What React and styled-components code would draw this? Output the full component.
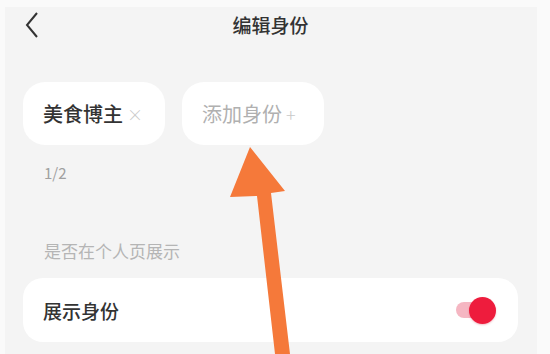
import styled, { createGlobalStyle } from 'styled-components';

const GlobalStyle = createGlobalStyle`
  html, body {
    margin: 0;
    padding: 0;
    background: #fafafa;
  }
  body {
    font-family: "Noto Sans CJK SC", "Noto Sans", sans-serif;
  }
`;

const Frame = styled.div`
  position: relative;
  width: 550px;
  height: 354px;
  overflow: hidden;
  background: #fafafa;
`;

const Screen = styled.div`
  margin: 7px 13px 0 5px;
  height: 347px;
  background: #f4f4f4;
  padding: 0 19px 0 18px;
  box-sizing: border-box;
`;

const Header = styled.div`
  position: relative;
  height: 34px;
  display: flex;
  align-items: center;
  justify-content: center;
`;

const Back = styled.div`
  position: absolute;
  left: 2px;
  top: 5px;
  width: 14px;
  height: 26px;
  color: #333;
`;

const Title = styled.div`
  font-size: 19px;
  font-weight: 500;
  color: #333;
  line-height: 1;
`;

const ChipRow = styled.div`
  display: flex;
  gap: 17px;
  margin-top: 41px;
`;

const Chip = styled.div`
  width: 142px;
  height: 63px;
  border-radius: 22px;
  background: #fff;
  display: flex;
  align-items: center;
  padding-left: 20px;
  box-sizing: border-box;
  font-size: 20px;
  color: ${(p) => (p.$muted ? '#b0b0b0' : '#333')};
  font-weight: ${(p) => (p.$muted ? 400 : 500)};
`;

const ChipMark = styled.span`
  margin-left: 4px;
  color: #c8c8c8;
  font-size: ${(p) => p.$size || 16}px;
  font-weight: 300;
`;

const Count = styled.div`
  margin-top: 18px;
  font-size: 15px;
  line-height: 20px;
  color: #a0a0a0;
  padding-left: 21px;
`;

const SectionLabel = styled.div`
  margin-top: 57px;
  font-size: 17px;
  line-height: 22px;
  color: #b5b5b5;
  padding-left: 21px;
`;

const Card = styled.div`
  margin-top: 16px;
  height: 64px;
  border-radius: 20px;
  background: #fff;
  display: flex;
  align-items: center;
  justify-content: space-between;
  padding: 0 22px 0 20px;
`;

const CardText = styled.div`
  font-size: 19px;
  font-weight: 500;
  color: #333;
`;

const Switch = styled.div`
  position: relative;
  width: 40px;
  height: 27px;
  display: flex;
  align-items: center;
`;

const Track = styled.div`
  width: 36px;
  height: 16px;
  border-radius: 8px;
  background: #f5b6c2;
`;

const Knob = styled.div`
  position: absolute;
  right: 0;
  top: 0;
  width: 27px;
  height: 27px;
  border-radius: 50%;
  background: #ee1c3d;
  box-shadow: 0 1px 2px rgba(200, 0, 30, 0.25);
`;

const Arrow = styled.svg`
  position: absolute;
  left: 0;
  top: 0;
  pointer-events: none;
`;

export default function App() {
  return (
    <Frame>
      <GlobalStyle />
      <Screen>
        <Header>
          <Back>
            <svg width="14" height="26" viewBox="0 0 14 26">
              <path d="M12 1 L2 13 L12 25" fill="none" stroke="#333" strokeWidth="2" />
            </svg>
          </Back>
          <Title>编辑身份</Title>
        </Header>
        <ChipRow>
          <Chip>
            美食博主<ChipMark>×</ChipMark>
          </Chip>
          <Chip $muted>
            添加身份<ChipMark $size={18}>+</ChipMark>
          </Chip>
        </ChipRow>
        <Count>1/2</Count>
        <SectionLabel>是否在个人页展示</SectionLabel>
        <Card>
          <CardText>展示身份</CardText>
          <Switch>
            <Track />
            <Knob />
          </Switch>
        </Card>
      </Screen>
      <Arrow width="550" height="354" viewBox="0 0 550 354">
        <polygon
          points="250,147 285,191 271,193 290,354 275,354 257,196 230,197"
          fill="#f5793a"
        />
      </Arrow>
    </Frame>
  );
}
